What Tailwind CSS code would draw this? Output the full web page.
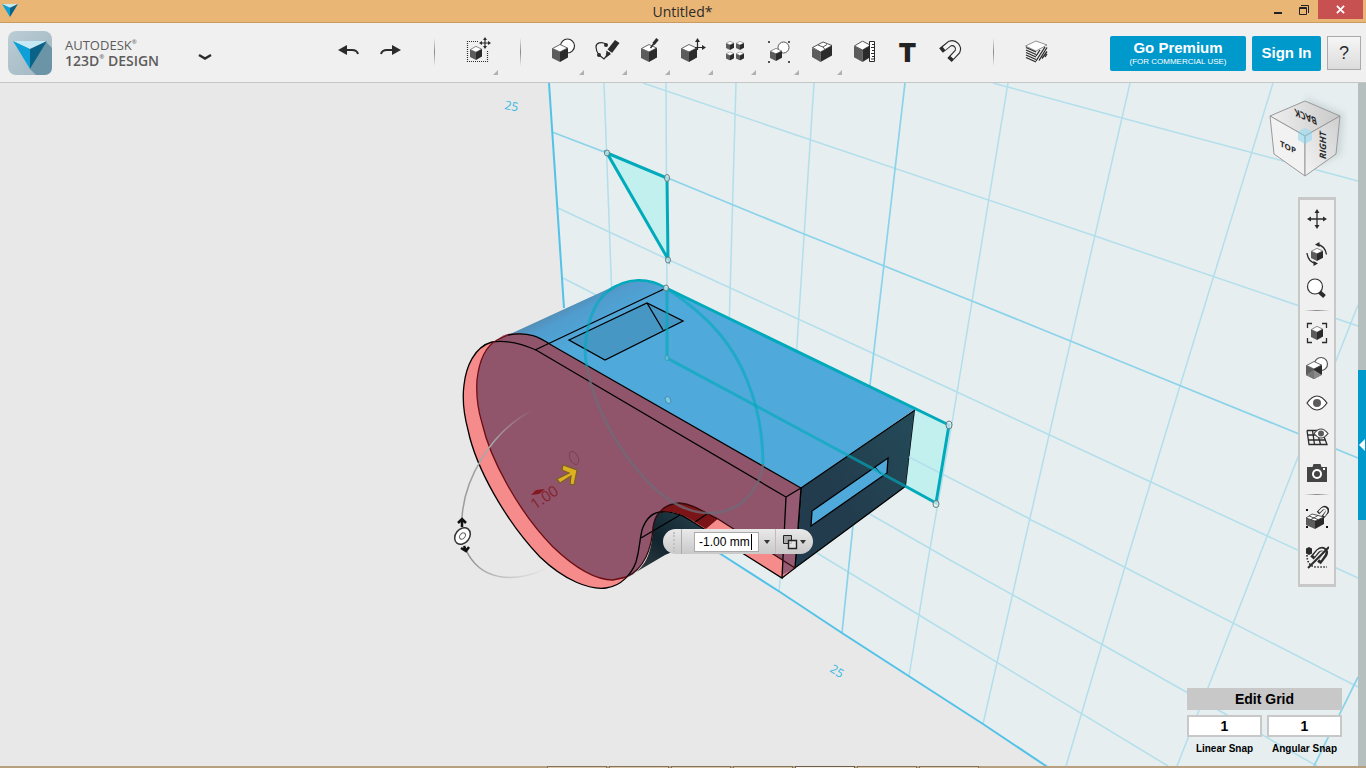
<!DOCTYPE html>
<html lang="en">
  <head>
    <meta charset="UTF-8" />
    <meta name="viewport" content="width=device-width, initial-scale=1.0" />
    <title>Untitled*</title>
    <script src="https://cdn.jsdelivr.net/npm/@tailwindcss/browser@4"></script>
  </head>
  <body class="flex h-screen flex-col overflow-hidden bg-[#e8e8e8] font-['Liberation_Sans',Arial,sans-serif] text-black">
    <!-- Shared icon parts -->
    <svg class="hidden">
      <symbol id="cube" viewBox="0 0 16 18" preserveAspectRatio="none">
        <path d="M8 .5 15.5 4 8 8 .5 4.500z" fill="#fff" stroke="#444" stroke-width=".8" />
        <path d="M0 4.500 8 8v10l-8-4z" fill="#5c5c5c" />
        <path d="M16 4 8 8v10l8-4.500z" fill="#2b2b2b" />
      </symbol>
      <symbol id="logo" viewBox="0 0 34 28" preserveAspectRatio="none">
        <path d="M0 0h34L17 8z" fill="#c4e9f5" />
        <path d="M0 0 17 8v20z" fill="#0d9fd8" />
        <path d="M34 0 17 8v20z" fill="#0b6287" />
      </symbol>
    </svg>

    <!-- Title bar -->
    <header class="flex h-[23px] shrink-0 items-start border-b border-[#c99b60] bg-[#eab676]">
      <div class="flex flex-1 pt-1 pl-[2px]">
        <svg class="h-[13px] w-4"><use href="#logo" width="16" height="13" /></svg>
      </div>
      <h1 class="font-['Open_Sans',sans-serif] text-[14px] leading-[23px] text-[#2b2b2b]">Untitled*</h1>
      <div class="flex flex-1 justify-end pr-[3px]">
        <button aria-label="Minimize" class="flex h-[19px] w-[26px] items-center justify-center">
          <svg class="h-4 w-4" viewBox="0 0 16 16"><path d="M4 10h8v2H4z" fill="#222" /></svg>
        </button>
        <button aria-label="Restore" class="flex h-[19px] w-[27px] items-center justify-center">
          <svg class="h-4 w-4" viewBox="0 0 16 16" fill="none" stroke="#222"><path d="M2.500 5.500h7v7h-7zM2 6.500h8M4 3.500h7.500V11" /></svg>
        </button>
        <button aria-label="Close" class="flex h-[19px] w-[45px] items-center justify-center bg-[#c75050]">
          <svg class="h-[9px] w-[9px]" viewBox="0 0 10 10" stroke="#fff" stroke-width="2"><path d="m1 1 8 8M9 1 1 9" /></svg>
        </button>
      </div>
    </header>

    <!-- Main toolbar -->
    <nav class="flex h-[60px] shrink-0 items-start border-b border-[#c6c6c6] bg-[#f0f0f0]">
      <div class="flex w-[327px] shrink-0 items-start pt-2 pl-2">
        <svg class="h-11 w-11 shrink-0" viewBox="0 0 44 44">
          <defs>
            <linearGradient id="tile" x1="0" y1="0" x2="1" y2="1"><stop stop-color="#bccdd5" /><stop offset="1" stop-color="#9fb6c1" /></linearGradient>
          </defs>
          <rect width="44" height="44" rx="8" fill="url(#tile)" />
          <path d="M38 11l6 6v19q0 8-8 8h-8l-6-6z" fill="#6b95a7" />
          <use href="#logo" x="5" y="10" width="34" height="28" />
        </svg>
        <div class="pt-[7px] pl-[13px] font-['Open_Sans',sans-serif] text-[14px] leading-[15px] text-[#5c5c5c]">
          <div class="text-[13px]">AUTODESK<span class="align-top text-[6px] leading-[8px]">®</span></div>
          <div class="font-semibold">123D<span class="align-top text-[6px] leading-[8px]">®</span> DESIGN</div>
        </div>
        <button aria-label="Application menu" class="mt-[18px] ml-[38px]">
          <svg class="h-4 w-4" viewBox="0 0 16 16" fill="none" stroke="#2b2b2b" stroke-width="2.500"><path d="m2 6 6 3.500L14 6" /></svg>
        </button>
      </div>

      <div class="flex h-full shrink-0 items-start pt-[13px]">
        <button aria-label="Undo" class="flex w-[43px] justify-center">
          <svg class="h-[30px] w-[30px]" viewBox="0 0 30 30"><path d="M4 14l9-5v10z" fill="#2b2b2b" /><path d="M12 14h6q5 0 6 4" fill="none" stroke="#2b2b2b" stroke-width="2" /></svg>
        </button>
        <button aria-label="Redo" class="flex w-[43px] justify-center">
          <svg class="h-[30px] w-[30px]" viewBox="0 0 30 30"><path d="M24 14l-9-5v10z" fill="#2b2b2b" /><path d="M16 14h-6q-5 0-6 4" fill="none" stroke="#2b2b2b" stroke-width="2" /></svg>
        </button>
        <div class="flex w-[43px] justify-center pt-[2px]"><div class="h-7 w-px bg-linear-to-b from-transparent via-[#888] to-transparent"></div></div>
        <button aria-label="Transform" class="flex w-[43px] flex-col items-center">
          <svg class="h-[30px] w-[30px]" viewBox="0 0 30 30">
            <path d="M15 5.500H4.500v20h20V14" fill="none" stroke="#2b2b2b" stroke-dasharray="1 1" stroke-width="1.200" />
            <use href="#cube" x="7" y="10" width="12" height="14" />
            <path d="M22 3v8M18 7h8" stroke="#2b2b2b" stroke-width="1.200" />
            <path d="m22 1 2 3h-4zM22 13l2-3h-4zM16 7l3-2v4zM28 7l-3-2v4z" fill="#2b2b2b" />
          </svg>
          <svg class="mt-1 ml-9 h-[5px] w-[5px]" viewBox="0 0 4 4"><path d="M4 0v4H0z" fill="#b0b0b0" /></svg>
        </button>
        <div class="flex w-[43px] justify-center pt-[2px]"><div class="h-7 w-px bg-linear-to-b from-transparent via-[#888] to-transparent"></div></div>
        <button aria-label="Primitives" class="flex w-[43px] flex-col items-center">
          <svg class="h-[30px] w-[30px]" viewBox="0 0 30 30">
            <circle cx="18.500" cy="10" r="7" fill="#fff" stroke="#2b2b2b" stroke-width="1.200" />
            <use href="#cube" x="3" y="8" width="16" height="18" />
          </svg>
          <svg class="mt-1 ml-9 h-[5px] w-[5px]" viewBox="0 0 4 4"><path d="M4 0v4H0z" fill="#b0b0b0" /></svg>
        </button>
        <button aria-label="Sketch" class="flex w-[43px] flex-col items-center">
          <svg class="h-[30px] w-[30px]" viewBox="0 0 30 30">
            <path d="M14 8C9 5 4 7 4 11q0 4 3 8l5 4 6-7" fill="none" stroke="#2b2b2b" stroke-width="1.200" />
            <circle cx="14" cy="9" r="2" fill="#2b2b2b" /><circle cx="7" cy="19" r="2" fill="#2b2b2b" />
            <path d="m23 4 4.500 3-7.500 10-4.500-3.500z" fill="#2b2b2b" /><path d="m14.500 14.500 4.500 3.500-5.500 4z" fill="#2b2b2b" />
            <path d="m15 14 5 3.500" stroke="#f0f0f0" />
          </svg>
          <svg class="mt-1 ml-9 h-[5px] w-[5px]" viewBox="0 0 4 4"><path d="M4 0v4H0z" fill="#b0b0b0" /></svg>
        </button>
        <button aria-label="Construct" class="flex w-[43px] flex-col items-center">
          <svg class="h-[30px] w-[30px]" viewBox="0 0 30 30">
            <use href="#cube" x="6" y="8" width="16" height="18" />
            <path d="m22.500 3-4 5" stroke="#2b2b2b" stroke-width="3" /><path d="m19 7.500-3.500 4.500" stroke="#2b2b2b" stroke-width="1.500" />
          </svg>
          <svg class="mt-1 ml-9 h-[5px] w-[5px]" viewBox="0 0 4 4"><path d="M4 0v4H0z" fill="#b0b0b0" /></svg>
        </button>
        <button aria-label="Modify" class="flex w-[43px] flex-col items-center">
          <svg class="h-[30px] w-[30px]" viewBox="0 0 30 30">
            <use href="#cube" x="3" y="8" width="16" height="18" />
            <path d="M19.500 14V5M17 11.500h9" stroke="#2b2b2b" stroke-width="1.200" />
            <path d="m19.500 2 2.500 4h-5zM28 11.500 24 9v5z" fill="#2b2b2b" />
          </svg>
          <svg class="mt-1 ml-9 h-[5px] w-[5px]" viewBox="0 0 4 4"><path d="M4 0v4H0z" fill="#b0b0b0" /></svg>
        </button>
        <button aria-label="Pattern" class="flex w-[43px] flex-col items-center">
          <svg class="h-[30px] w-[30px]" viewBox="0 0 30 30">
            <use href="#cube" x="5" y="5" width="8" height="9" /><use href="#cube" x="15" y="5" width="8" height="9" />
            <use href="#cube" x="5" y="15.500" width="8" height="9" /><use href="#cube" x="15" y="15.500" width="8" height="9" />
          </svg>
          <svg class="mt-1 ml-9 h-[5px] w-[5px]" viewBox="0 0 4 4"><path d="M4 0v4H0z" fill="#b0b0b0" /></svg>
        </button>
        <button aria-label="Grouping" class="flex w-[43px] flex-col items-center">
          <svg class="h-[30px] w-[30px]" viewBox="0 0 30 30">
            <circle cx="19.500" cy="11.500" r="5.500" fill="#fff" stroke="#555" />
            <use href="#cube" x="6" y="12" width="12" height="13" />
            <path d="M4 5h2v2H4zM24 5h2v2h-2zM4 25h2v2H4zM24 25h2v2h-2z" fill="#555" />
          </svg>
          <svg class="mt-1 ml-9 h-[5px] w-[5px]" viewBox="0 0 4 4"><path d="M4 0v4H0z" fill="#b0b0b0" /></svg>
        </button>
        <button aria-label="Combine" class="flex w-[43px] flex-col items-center">
          <svg class="h-[30px] w-[30px]" viewBox="0 0 30 30">
            <path d="M5 12v9l8.500 5V16z" fill="#5c5c5c" /><path d="M25 9.500 13.500 16v10L25 19.500z" fill="#2b2b2b" />
            <path d="M5.500 11.500 16 6l9 3.500L13.500 16z" fill="#fff" stroke="#2b2b2b" stroke-width=".8" />
            <path d="m11 9 5 2 4-2.500M16 11l2 2.500" fill="none" stroke="#2b2b2b" stroke-width=".8" />
          </svg>
          <svg class="mt-1 ml-9 h-[5px] w-[5px]" viewBox="0 0 4 4"><path d="M4 0v4H0z" fill="#b0b0b0" /></svg>
        </button>
        <button aria-label="Measure" class="flex w-[43px] justify-center">
          <svg class="h-[30px] w-[30px]" viewBox="0 0 30 30">
            <use href="#cube" x="4" y="4.500" width="17" height="21.500" />
            <path d="M19.500 5.500h5v20h-5z" fill="#fff" stroke="#2b2b2b" />
            <path d="M22 8.500h2.500M21 11.500h3.500M22 14.500h2.500M21 17.500h3.500M22 20.500h2.500M21 23h3.500" stroke="#2b2b2b" />
          </svg>
        </button>
        <button aria-label="Text" class="flex h-8 w-[43px] items-end justify-center font-['Inter',sans-serif] text-[26px] leading-[30px] font-black text-[#222]">T</button>
        <button aria-label="Snap" class="flex w-[43px] justify-center">
          <svg class="h-[30px] w-[30px]" viewBox="0 0 30 30" fill="none">
            <path d="M5 14.500 14 7.500a6 6 0 0 1 7.500 8L13.500 24" stroke="#2b2b2b" stroke-width="6" />
            <path d="M8 12.500 14 7.500a6 6 0 0 1 7.500 8l-5.500 6" stroke="#f4f4f4" stroke-width="3.800" />
          </svg>
        </button>
        <div class="flex w-[43px] justify-center pt-[2px]"><div class="h-7 w-px bg-linear-to-b from-transparent via-[#888] to-transparent"></div></div>
        <button aria-label="Material" class="flex w-[43px] justify-center">
          <svg class="h-[30px] w-[30px]" viewBox="0 0 30 30" fill="none" stroke="#2b2b2b">
            <path d="M14 5 25 9l-11 6L3.500 10z" fill="#fff" stroke="#777" stroke-width=".8" />
            <path d="m4 11.500 10 4.500M4 14l10 4.500M4 16.500 14 21M4 19l10 4.500M4 21.500 14 26" stroke-width="1.300" />
            <path d="m14 20 4-6M14 25l9-14M17 24.500l8-13M20 22.500l5-7M23 21l2-3" stroke-width="1.300" />
          </svg>
        </button>
      </div>

      <div class="flex flex-1 justify-end pt-[13px] pr-[5px]">
        <button class="h-[35px] w-[136px] rounded-xs bg-[#0099cc] text-white">
          <span class="block text-[15px] leading-[17px] font-bold">Go Premium</span>
          <span class="block text-[8px] leading-[12px]">(FOR COMMERCIAL USE)</span>
        </button>
        <button class="ml-[6px] h-[35px] w-[69px] rounded-xs bg-[#0099cc] text-[15px] font-bold text-white">Sign In</button>
        <button aria-label="Help" class="ml-[6px] h-[34px] w-[34px] border border-[#aaa] bg-linear-to-b from-[#f6f6f6] to-[#dcdcdc] text-[18px] text-[#2b2b2b]">?</button>
      </div>
    </nav>

    <main class="relative min-h-0 flex-1 overflow-hidden">
      <!-- Modeling canvas -->
      <svg class="absolute inset-0 h-full w-full" viewBox="0 83 1366 683" preserveAspectRatio="xMidYMid slice" fill="none">
        <defs>
          <linearGradient id="barrel" gradientUnits="userSpaceOnUse" x1="550" y1="306" x2="572" y2="350"><stop stop-color="#5683a3" /><stop offset=".35" stop-color="#509cce" /><stop offset="1" stop-color="#50a9db" /></linearGradient>
          <linearGradient id="endface" x1="1" y1="0" x2="0" y2="1"><stop stop-color="#244b59" /><stop offset=".6" stop-color="#223c4d" /></linearGradient>
          <linearGradient id="notch" x1="0" y1="1" x2="1" y2="0"><stop stop-color="#40464a" /><stop offset=".5" stop-color="#10242d" /><stop offset="1" stop-color="#27434f" /></linearGradient>
          <linearGradient id="arcUp" gradientUnits="userSpaceOnUse" x1="462" y1="520" x2="533" y2="410"><stop stop-color="#999" /><stop offset=".6" stop-color="#aaa" /><stop offset="1" stop-color="#aaa" stop-opacity="0" /></linearGradient>
          <linearGradient id="arcDown" gradientUnits="userSpaceOnUse" x1="466" y1="550" x2="548" y2="570"><stop stop-color="#888" /><stop offset="1" stop-color="#aaa" stop-opacity="0" /></linearGradient>
        </defs>
        <path d="M549 83H1358V766H1046L720 554 564 308z" fill="#e6eeef" />
        <g stroke="#b3dfec" stroke-width="1.500">
          <path d="M604 83 612 300M666 83 667 300M736 83 729 330M814 83 796 360M781 570 779 592M1008 83 952 423 928 560 909 676M1130 83 1025 540 983 724M1273 83 1180 386 1127 560 1066 766M1358 305 1298 457 1215 670 1177 766" />
          <path d="M993 83 1122 118 1358 181M643 83 811 140 1095 236 1358 326M558 208 667 259 820 329 957 392 1153 483 1358 578M563 278 600 297M1029 519 1072 540 1190 601 1358 687M868 513 950 560 1103 645 1220 711 1317 766M817 553 919 615 1168 766" />
        </g>
        <path d="M905 83 870 385 853 525 842 633M552 132 607 153 804 234 972 301 1181 386 1358 458M1358 677 1314 766" stroke="#8ad3ea" stroke-width="1.700" />
        <path d="M549 83 564 308M716 551 780 592 842 633 983 724 1049 768" stroke="#52c2e8" stroke-width="2" />

        <g fill="#35b8e0" font-family="Open Sans, sans-serif" font-size="12">
          <text transform="translate(504 109) rotate(10)">25</text>
          <text transform="translate(829 671) rotate(32)">25</text>
        </g>

        <!-- Whistle body -->
        <path d="M500 339 508 335 608 289C625 279 648 277 667 288L915 409 801 488 553 346Z" fill="url(#barrel)" />
        <path d="M801 488 915 410 906 486 795 568z" fill="url(#endface)" stroke="#000" stroke-width="1.300" />
        <path d="M915 410 949 425 936 503 906 486z" fill="#c2f0ef" />
        <path d="M909 457 1030 519" stroke="#b3dfec" stroke-width="1.500" />
        <path d="M812 511 888 458 887 473 811 526z" fill="#50a9db" stroke="#000" stroke-width="1.300" />
        <path d="M875 467 881 474" stroke="#000" />
        <path d="M569 340 647 303 683 321 605 360z" fill="#4797c4" stroke="#000" stroke-width="1.300" />
        <path d="M647 303 663 330" stroke="#000" stroke-width="1.300" />

        <!-- Extruded region -->
        <path d="M536 350C520 343 505 340 492 342 474 347 466 367 464 385 462 400 464 415 468 430 476 468 505 520 540 557 565 581 590 590 606 588 622 586 632 573 636 562 640 548 639 543 642 530 646 518 652 513 660 512 675 511 684 516 693 522L782 578 795 568 801 488z" fill="#f58b8b" />
        <path d="M497 340C503 334 511 333 518 333 530 334 540 338 553 346L801 488 795 568 782 560 707 514C694 507 688 503 679 503 663 504 655 515 653 527 652 548 642 580 613 580 596 580 575 568 553 547 517 510 490 458 482 423 478 410 476 395 477 380 479 362 484 347 497 340z" fill="#90556b" />
        <path d="M653 527C655 515 663 504 679 503 694 504 701 511 718 519L706 529C692 520 682 513 670 512 660 512 655 516 653 527z" fill="#7b1417" />
        <path d="M718 519 795 568 782 578 706 529z" fill="#f58b8b" />
        <path d="M786 497 801 488 795 568 782 575z" fill="#965a73" />
        <path d="M658 513C675 511 684 516 693 522L706 530 700 540 665 555 626 578C650 568 652 545 653 527 654 520 655 516 658 513z" fill="url(#notch)" />
        <g stroke="#000" stroke-width="1.300">
          <path d="M536 350C520 343 505 340 492 342 474 347 466 367 464 385 462 400 464 415 468 430 476 468 505 520 540 557 565 581 590 590 606 588 622 586 632 573 636 562 640 548 639 543 642 530 646 518 652 513 660 512 675 511 684 516 693 522L782 578 786 497z" />
          <path d="M508 335C530 331 540 338 553 346L801 488 795 568 782 578M786 497 801 488M535 350 664 289M641 538 680 515M695 522 707 514" />
          <path d="M679 503C694 504 701 511 718 519L795 568M679 503C663 504 655 515 653 527 652 548 644 570 626 577" stroke="#350a0d" />
          <path d="M508 335 497 340C484 347 479 362 477 380 476 395 478 410 482 423 490 458 517 510 553 547 575 568 596 580 613 580L626 577" stroke="#6e0d12" />
        </g>

        <!-- Sketch curves -->
        <path d="M607 153 667 178 668 259z" fill="#c2f0ef" />
        <g stroke="#00aabb" stroke-width="3">
          <path d="M607 153 667 178 668 259zM666 288 949 425 936 503 905 486" />
          <path d="M607 292C627 276 650 278 666 288" stroke-width="2.500" />
          <path d="M905 486 667 358V288" stroke-opacity=".65" />
          <path d="M587 367C582 345 588 308 607 292M666 288C715 320 735 350 747 380 756 402 763 430 763 464" stroke-opacity=".6" />
          <path d="M587 367C593 400 608 430 627 457 642 477 660 497 680 506 705 518 730 514 745 500 757 488 762 475 763 464" stroke="#6e6c78" stroke-opacity=".75" stroke-width="2.500" />
        </g>
        <g fill="#e6f4f6" fill-opacity=".7" stroke="#667a80">
          <ellipse cx="607" cy="153" rx="2.500" ry="3" /><ellipse cx="667" cy="178" rx="2.500" ry="3.500" /><ellipse cx="668" cy="260" rx="2.500" ry="3" />
          <ellipse cx="666" cy="288" rx="2.500" ry="3" /><ellipse cx="949" cy="425" rx="3" ry="4" /><ellipse cx="936" cy="504" rx="3" ry="3.500" />
          <ellipse cx="667" cy="358" rx="2" ry="2.500" stroke="#3c9cb4" fill-opacity=".3" /><ellipse cx="668" cy="400" rx="2.500" ry="3.500" transform="rotate(-25 668 400)" stroke="#4a90b0" fill="#8fd8e6" />
        </g>

        <!-- Manipulator -->
        <path d="M462 518C464 480 490 432 533 410" stroke="url(#arcUp)" stroke-width="1.500" />
        <path d="M466 550C480 580 512 584 545 569" stroke="url(#arcDown)" stroke-width="1.500" />
        <path d="M462 527V519M458 523l4-4 4 4M464 546l2 5M461 548l5 3 3-4" stroke="#111" stroke-width="2.500" />
        <ellipse cx="462.500" cy="536" rx="7" ry="9" transform="rotate(38 462.500 536)" fill="#fff" stroke="#333" stroke-width="1.500" />
        <ellipse cx="462.500" cy="536" rx="2.500" ry="3.500" transform="rotate(38 462.500 536)" stroke="#666" />
        <path d="M557 479 569 473 562 470 563 465 577 470 574 485 570 484 571 476 560 483z" fill="#deaf1e" stroke="#77602a" stroke-width="1.200" />
        <ellipse cx="574" cy="458" rx="4" ry="7" transform="rotate(-25 574 458)" stroke="#833f50" />
        <path d="M531 495 536 490 545 489 539 494z" fill="#831820" />
        <text transform="translate(535 510) rotate(-34)" fill="#84232f" font-family="Open Sans, sans-serif" font-size="15">1.00</text>
      </svg>

      <!-- Dimension entry -->
      <form class="absolute top-[446px] left-[663px] flex h-[25px] w-[150px] items-center rounded-full bg-linear-to-b from-[#e9e9e9] to-[#c9c9c9]">
        <div class="ml-[10px] h-5 border-l-2 border-dotted border-[#c2c2c2]"></div>
        <div class="ml-[6px] h-[25px] w-px bg-[#aaa]"></div>
        <div class="ml-3 flex h-5 w-[65px] items-center border border-[#aaa] bg-white pl-1">
          <input aria-label="Distance" value="-1.00 mm" class="w-[52px] bg-transparent text-[12px] leading-4 outline-none" />
          <span class="h-4 w-px bg-black"></span>
        </div>
        <button type="button" aria-label="Distance options" class="flex w-4 justify-center">
          <svg class="h-[6px] w-2" viewBox="0 0 8 6"><path d="M1 1h6L4 5z" fill="#333" /></svg>
        </button>
        <div class="h-[25px] w-px bg-[#c8b8b8]"></div>
        <button type="button" aria-label="Operation" class="ml-[6px] flex items-center gap-px">
          <svg class="h-4 w-4" viewBox="0 0 16 16" stroke="#222"><path d="M1.500 1.500h8v8h-8z" fill="#aaa" /><path d="M6.500 6.500h8v8h-8z" fill="#e6e6e6" fill-opacity=".8" stroke-width="1.400" /></svg>
          <svg class="h-[6px] w-2" viewBox="0 0 8 6"><path d="M1 1h6L4 5z" fill="#333" /></svg>
        </button>
      </form>

      <!-- View cube -->
      <svg class="absolute top-2 right-[18px] h-[92px] w-[88px]" viewBox="1260 91 88 92">
        <defs>
          <linearGradient id="vtop" x1="0" y1="0" x2="1" y2="0"><stop stop-color="#efefef" /><stop offset="1" stop-color="#c9c9c9" /></linearGradient>
          <linearGradient id="vright" x1="0" y1="1" x2="1" y2="0"><stop stop-color="#f3f3f3" /><stop offset="1" stop-color="#cfcfcf" /></linearGradient>
          <filter id="soft"><feGaussianBlur stdDeviation="3" /></filter>
        </defs>
        <path d="M1305 97 1344 114 1341 154 1320 165z" fill="#8fa0a4" fill-opacity=".3" filter="url(#soft)" />
        <g stroke="#999" stroke-linejoin="round">
          <path d="M1305 101 1340 116 1305 136 1270 116z" fill="url(#vtop)" />
          <path d="M1270 116 1305 136V176L1274 154z" fill="#f2f2f2" />
          <path d="M1340 116 1305 136V176L1336 154z" fill="url(#vright)" />
        </g>
        <path d="M1298 131.500 1305 128 1312 131.500V140L1305 144 1298 140z" fill="#9fdcf0" fill-opacity=".7" />
        <path d="m1298 132 7 4v8M1305 136l7-4" fill="none" stroke="#8fbac8" />
        <g fill="#2b2b2b" font-family="Open Sans, sans-serif" font-weight="700" font-size="10" text-anchor="middle">
          <text transform="translate(1288 150) skewY(25)" font-size="8">TOP</text>
          <text transform="translate(1326 146) rotate(-90) skewX(-18)" font-size="9">RIGHT</text>
          <text transform="translate(1305 113) rotate(203) skewX(35)" font-size="9">BACK</text>
        </g>
      </svg>

      <!-- Navigation bar -->
      <aside class="absolute top-[114px] right-[30px] flex w-[38px] flex-col items-stretch border-x-2 border-y-3 border-[#c8c8c8] bg-[#f0f0f0] pt-px pb-[2px]">
        <button aria-label="Pan" class="flex h-[35px] items-center justify-center">
          <svg class="h-6 w-6" viewBox="0 0 24 24"><path d="M12 4v16M4 12h16" stroke="#2b2b2b" stroke-width="1.300" /><path d="m12 2 2.500 4h-5zM12 22l2.500-4h-5zM2 12l4-2.500v5zM22 12l-4-2.500v5z" fill="#2b2b2b" /></svg>
        </button>
        <button aria-label="Orbit" class="flex h-[35px] items-center justify-center">
          <svg class="h-6 w-6" viewBox="0 0 24 24" fill="none"><use href="#cube" x="6" y="6" width="12" height="13" /><path d="M12 2.500q8 1 9.500 10M11 21.500Q3 20 2 11" stroke="#2b2b2b" stroke-width="1.300" /><path d="M10 2.500 14.500 0v5zM13 21.500 8.500 24v-5z" fill="#2b2b2b" /></svg>
        </button>
        <button aria-label="Zoom" class="flex h-[35px] items-center justify-center">
          <svg class="h-6 w-6" viewBox="0 0 24 24"><circle cx="10" cy="9.500" r="7.500" fill="#fff" stroke="#333" stroke-width="1.200" /><path d="m14.500 15 5 4.500" stroke="#2b2b2b" stroke-width="4" /></svg>
        </button>
        <div class="mx-1 my-1 h-px bg-linear-to-r from-transparent via-[#888] to-transparent"></div>
        <button aria-label="Fit" class="flex h-[35px] items-center justify-center">
          <svg class="h-6 w-6" viewBox="0 0 24 24" fill="none"><path d="M2.500 7V2.500H7M17 2.500h4.500V7M21.500 17v4.500H17M7 21.500H2.500V17" stroke="#2b2b2b" stroke-width="1.300" /><use href="#cube" x="6" y="5" width="12" height="14" /></svg>
        </button>
        <button aria-label="Display style" class="flex h-[35px] items-center justify-center">
          <svg class="h-6 w-6" viewBox="0 0 24 24"><circle cx="16" cy="8" r="6.500" fill="#fff" stroke="#555" stroke-width="1.200" /><use href="#cube" x="1" y="5" width="16" height="18" /><path d="m1 19 8-5 8 5-8 4z" fill="#8a8a8a" /><path d="M9 14v9l-8-4z" fill="#777" /></svg>
        </button>
        <button aria-label="Visibility" class="flex h-[35px] items-center justify-center">
          <svg class="h-6 w-6" viewBox="0 0 24 24"><path d="M2 12q10-14 20 0-10 14-20 0z" fill="#fff" stroke="#333" stroke-width="1.200" /><circle cx="12" cy="12" r="4" fill="#5c5c5c" /></svg>
        </button>
        <button aria-label="Grid visibility" class="flex h-[35px] items-center justify-center">
          <svg class="h-6 w-6" viewBox="0 0 24 24" fill="none"><path d="M2 4.500h11M2 4.500l2 14h18l-3-8M3 9h15M3.500 14H20M7.500 4.500l2 14M12 5l3.500 13.500" stroke="#2b2b2b" stroke-width="1.300" /><path d="M9 7.500q7-9 14 0-7 9-14 0z" fill="#fff" stroke="#444" stroke-width="1.200" /><circle cx="16" cy="7.500" r="3" fill="#5c5c5c" /></svg>
        </button>
        <button aria-label="Screenshot" class="flex h-[35px] items-center justify-center">
          <svg class="h-6 w-6" viewBox="0 0 24 24"><path d="M2 6h5.500l1-3h7l1 3H22v15H2z" fill="#444" /><circle cx="12" cy="13" r="5" fill="#fff" /><circle cx="12" cy="13" r="3" fill="#444" /><path d="M18 7h2v2h-2z" fill="#fff" /></svg>
        </button>
        <div class="mx-1 my-1 h-px bg-linear-to-r from-transparent via-[#888] to-transparent"></div>
        <button aria-label="Snap to object" class="flex h-[35px] items-center justify-center">
          <svg class="h-6 w-6" viewBox="0 0 24 24" fill="none"><path d="M1 13l9 3v8l-9-4z" fill="#5c5c5c" /><path d="m10 16 9-4v7l-9 5z" fill="#2b2b2b" /><path d="m1 13 6-4 12 3-9 4zM4 11l9 3.500M6 14.500l7-4" fill="#fff" stroke="#2b2b2b" stroke-width=".8" /><path d="m13 8 4-4c3-3 7 0 5 3l-4 5" stroke="#2b2b2b" stroke-width="3.500" /><path d="m14 7 3-3c3-2 6 1 4 4l-2 3" stroke="#f4f4f4" stroke-width="1.800" /><path d="M1 4h2v2H1zM1 21h2v2H1zM21 21h2v2h-2z" fill="#111" /></svg>
        </button>
        <button aria-label="Toggle snap" class="flex h-12 items-center justify-center">
          <svg class="h-6 w-6" viewBox="0 0 24 24" fill="none"><path d="M1 2.500 4 1l3 1.500v5L4 9 1 7.500z" fill="#2b2b2b" /><path d="M2 9q0 11 9 12h11" stroke="#2b2b2b" stroke-dasharray="1.500 1.500" stroke-width="1.600" /><path d="m7 12 6-7c4-4 10-1 7 4l-6 8" stroke="#2b2b2b" stroke-width="4.500" /><path d="m9 10 4-5c4-3 8-1 6 3l-4 6" stroke="#f0f0f0" stroke-width="2" /><path d="M24 1 3 22" stroke="#2b2b2b" stroke-width="2" /></svg>
        </button>
      </aside>

      <!-- Snap settings -->
      <form class="absolute right-6 bottom-[11px] w-[155px]">
        <button type="button" class="block h-[22px] w-full bg-[#c8c8c8] text-[14px] font-bold">Edit Grid</button>
        <div class="mt-[5px] grid grid-cols-2 gap-[5px] text-center font-bold">
          <div>
            <input id="linear" value="1" class="block h-[22px] w-full border-2 border-[#c8c8c8] bg-white text-center text-[14px]" />
            <label for="linear" class="block pt-[6px] text-[10px] leading-3">Linear Snap</label>
          </div>
          <div>
            <input id="angular" value="1" class="block h-[22px] w-full border-2 border-[#c8c8c8] bg-white text-center text-[14px]" />
            <label for="angular" class="block pt-[6px] text-[10px] leading-3">Angular Snap</label>
          </div>
        </div>
      </form>

      <!-- Side panel handle -->
      <div class="absolute inset-y-0 right-0 w-2 bg-[#b5bfbe]">
        <button aria-label="Open panel" class="mt-[287px] flex h-[150px] w-2 items-center bg-[#0099cc]">
          <svg class="h-3 w-2" viewBox="0 0 8 12"><path d="M7 0v12L1 6z" fill="#fff" /></svg>
        </button>
      </div>
    </main>

    <footer class="flex h-[2px] shrink-0 justify-center gap-[2px] bg-[#b7a07f] pl-[160px]">
      <div class="w-[60px] border-x border-t border-[#857257] bg-[#d8c9ae]"></div>
      <div class="w-[60px] border-x border-t border-[#857257] bg-[#d8c9ae]"></div>
      <div class="w-[60px] border-x border-t border-[#857257] bg-[#d8c9ae]"></div>
      <div class="w-[60px] border-x border-t border-[#857257] bg-[#d8c9ae]"></div>
      <div class="w-[60px] border-x border-t border-[#6d5c49] bg-[#f4eee4]"></div>
      <div class="w-[60px] border-x border-t border-[#857257] bg-[#d8c9ae]"></div>
      <div class="w-[60px] border-x border-t border-[#857257] bg-[#d8c9ae]"></div>
    </footer>
  </body>
</html>
